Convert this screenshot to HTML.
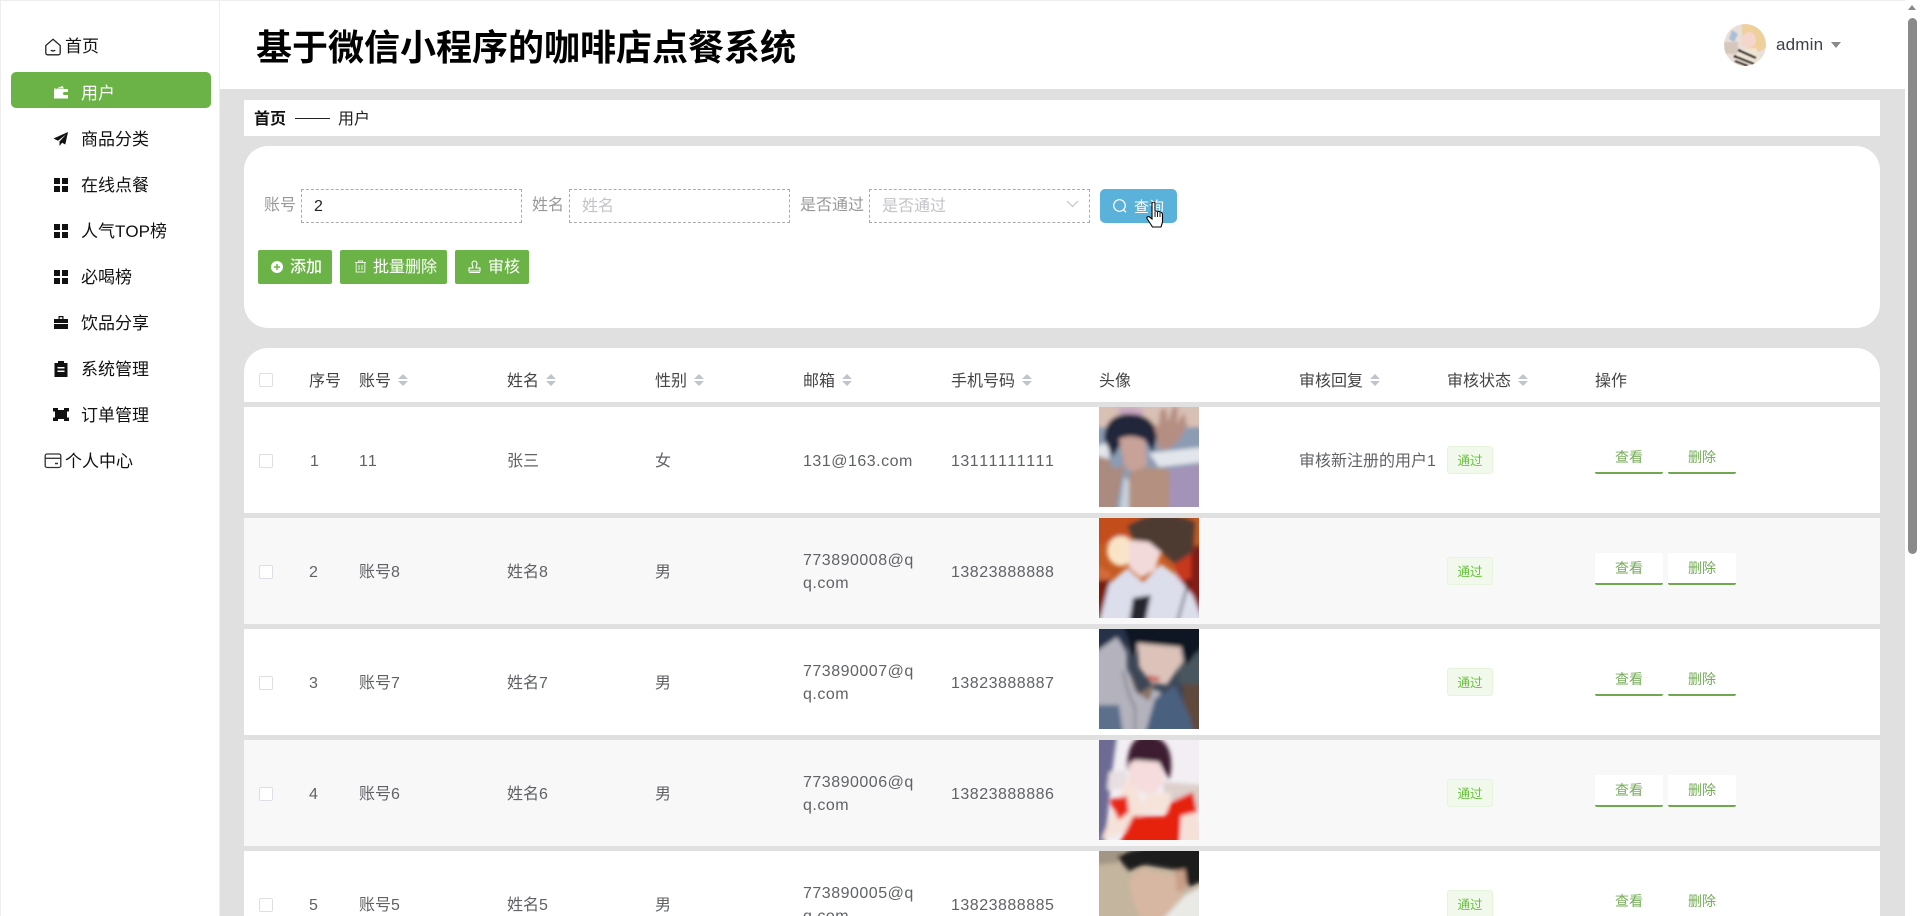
<!DOCTYPE html>
<html lang="zh"><head><meta charset="utf-8"><title>用户</title>
<style>
html,body{margin:0;padding:0;width:1920px;height:916px;overflow:hidden;background:#fff}
body{position:relative;font-family:"Liberation Sans","Noto Sans CJK SC",sans-serif;font-size:16px;color:#606266;font-kerning:none}
.a,.t,.h,.n,.chk,.car,.tag,.op,.r,.btn,.img{position:absolute}
.t{white-space:nowrap;line-height:24px;height:24px}
.n{left:0;margin-top:1px;white-space:nowrap;font-size:17px;color:#111;line-height:24px;height:24px}
.n.s{left:81px}.n.m{left:65px}
.h{color:#444;white-space:nowrap;line-height:24px;height:24px;top:370px}
.chk{left:259px;width:12px;height:12px;border:1px solid #dcdfe6;background:#fff;border-radius:2px}
.car{width:10px;height:12px;top:374px}
.r{left:244px;width:1636px;height:106px;background:#fff}
.r.e{background:#f8f8f8}
.tag{left:1447px;width:44px;height:26px;line-height:28px;border:1px solid #e6f3dd;background:#f0f9eb;color:#67c23a;font-size:12.500px;text-align:center;border-radius:3px}
.op{width:68px;height:30px;line-height:30px;border-bottom:2px solid #6fa84f;background:#fff;color:#74ad58;font-size:14px;text-align:center;border-radius:2px}
.op.v{left:1595px}.op.d{left:1668px}
.btn{top:250px;height:34px;background:#6cb347;border-radius:2px;color:#fff}
.btn span{position:absolute;top:5px;line-height:24px;white-space:nowrap}
.img{left:1099px;width:100px;height:100px}
.lb{color:#999}
.in{position:absolute;top:189px;height:32px;border:1px dashed #aaa;background:#fff;line-height:34px;color:#c4c4c8;box-sizing:content-box}
.ls{letter-spacing:.5px}
</style></head><body>

<!-- frame -->
<div class="a" style="left:0;top:0;width:219px;height:916px;background:#fff;border-right:1px solid #eee;box-shadow:inset 1px 1px 0 #eee"></div>
<div class="a" style="left:220px;top:0;width:1685px;height:89px;background:#fff;border-top:1px solid #eee;box-sizing:border-box"></div>
<div class="a" style="left:220px;top:89px;width:1685px;height:827px;background:#e0e0e0"></div>
<div class="a" style="left:1905px;top:0;width:15px;height:916px;background:#fff"></div>
<div class="a" style="left:1908px;top:18px;width:9px;height:536px;background:#8a8a8a;border-radius:5px"></div>
<div class="a" style="left:1908px;top:5px;width:0;height:0;border-left:4.500px solid transparent;border-right:4.500px solid transparent;border-bottom:5px solid #8a8a8a"></div>

<!-- sidebar -->
<div class="a" style="left:11px;top:72px;width:200px;height:36px;background:#6cb347;border-radius:5px"></div>
<svg class="a" style="left:44px;top:38px" width="18" height="18" viewBox="0 0 18 18" fill="none" stroke="#222" stroke-width="1.300"><path d="M9 1.300 16.200 7.500V15a1.800 1.800 0 0 1-1.800 1.800H3.600A1.800 1.800 0 0 1 1.800 15V7.500Z"/><path d="M6.800 12.200q2.200 1.500 4.400 0"/></svg>
<div class="n m" style="top:34px">首页</div>
<svg class="a" style="left:53px;top:85px" width="16" height="14" viewBox="0 0 16 14" fill="#fff"><path d="M1 4.500 9.500 1l1.500 2.500H1ZM1 4h14v3h-3.500a1.500 1.500 0 0 0 0 3H15v3.500H1Z"/></svg>
<div class="n s" style="top:81px;color:#fff">用户</div>
<svg class="a" style="left:53px;top:131px" width="16" height="16" viewBox="0 0 16 16" fill="#111"><path d="M15 1 0.500 7.500l4.500 2.200L13 3.500 6.500 10.500V15l2.600-3.300 3.200 1.800Z"/></svg>
<div class="n s" style="top:127px">商品分类</div>
<svg class="a" style="left:54px;top:178px" width="14" height="14" fill="#111"><rect width="6" height="6"/><rect x="8" width="6" height="6"/><rect y="8" width="6" height="6"/><rect x="8" y="8" width="6" height="6"/></svg>
<div class="n s" style="top:173px">在线点餐</div>
<svg class="a" style="left:54px;top:224px" width="14" height="14" fill="#111"><rect width="6" height="6"/><rect x="8" width="6" height="6"/><rect y="8" width="6" height="6"/><rect x="8" y="8" width="6" height="6"/></svg>
<div class="n s" style="top:219px">人气TOP榜</div>
<svg class="a" style="left:54px;top:270px" width="14" height="14" fill="#111"><rect width="6" height="6"/><rect x="8" width="6" height="6"/><rect y="8" width="6" height="6"/><rect x="8" y="8" width="6" height="6"/></svg>
<div class="n s" style="top:265px">必喝榜</div>
<svg class="a" style="left:54px;top:315px" width="14" height="15" viewBox="0 0 14 15" fill="#111"><path d="M4.500 1h5v3H8.300V2.200H5.700V4H4.500ZM0 4h14v4H0ZM0 9h14v5H0Z"/></svg>
<div class="n s" style="top:311px">饮品分享</div>
<svg class="a" style="left:54px;top:361px" width="14" height="16" viewBox="0 0 14 16" fill="#111"><path d="M4 0h6v2h3.500v14H.5V2H4Zm-.5 6v1.500h7V6Zm0 3.500V11h7V9.500Z" fill-rule="evenodd"/></svg>
<div class="n s" style="top:357px">系统管理</div>
<svg class="a" style="left:53px;top:408px" width="16" height="13" viewBox="0 0 16 13" fill="#111"><path d="M0 0h5v2h6V0h5v3.500h-2V9.500h2V13h-5v-2H5v2H0V9.500h2V3.500H0Z"/></svg>
<div class="n s" style="top:403px">订单管理</div>
<svg class="a" style="left:44px;top:452px" width="18" height="18" viewBox="0 0 18 18" fill="none" stroke="#333" stroke-width="1.300"><rect x="1.200" y="2" width="15.600" height="13.500" rx="1.800"/><path d="M1.200 6.300h15.600"/><path d="M11 11.500h3" stroke-width="1.500"/></svg>
<div class="n m" style="top:449px">个人中心</div>

<!-- header -->
<div class="t" style="left:256px;top:26px;height:44px;line-height:44px;font-size:36px;font-weight:700;color:#000">基于微信小程序的咖啡店点餐系统</div>
<svg class="a" style="left:1724px;top:24px" width="42" height="42" viewBox="0 0 42 42"><defs><clipPath id="c0"><circle cx="21" cy="21" r="21"/></clipPath><filter id="bs"><feGaussianBlur stdDeviation=".8"/></filter></defs><g clip-path="url(#c0)"><rect width="42" height="42" fill="#e9dfd8"/><g filter="url(#bs)"><path d="M18 0H42V24L30 30 18 20Z" fill="#efcf9a"/><ellipse cx="25" cy="16" rx="7" ry="8" fill="#f6d6cc"/><path d="M8 6l6 4-4 8-5-3Z" fill="#a9bfd8"/><path d="M0 18h14v12H0Z" fill="#d6c7bd"/><path d="M10 42 14 26l18-2 8 18Z" fill="#efe5d6"/><path d="M10 32 30 40M11 37 24 42M14 26 32 34" stroke="#2b2320" stroke-width="2.500"/></g></g></svg>
<div class="t" style="left:1776px;top:33px;font-size:17px;color:#3a3f4b;letter-spacing:.2px">admin</div>
<div class="a" style="left:1831px;top:42px;width:0;height:0;border-left:5.500px solid transparent;border-right:5.500px solid transparent;border-top:6.500px solid #8a8a8a"></div>

<!-- breadcrumb -->
<div class="a" style="left:244px;top:100px;width:1636px;height:36px;background:#fff"></div>
<div class="t" style="left:254px;top:108px;font-size:16px;font-weight:700;color:#111">首页</div>
<div class="a" style="left:295px;top:118px;width:35px;height:1px;background:#222"></div>
<div class="t" style="left:338px;top:108px;font-size:16px;color:#222">用户</div>

<!-- search card -->
<div class="a" style="left:244px;top:146px;width:1636px;height:182px;background:#fff;border-radius:24px"></div>
<div class="t lb" style="left:264px;top:194px">账号</div>
<div class="in" style="left:301px;width:219px;color:#222"><span style="margin-left:12px">2</span></div>
<div class="t lb" style="left:532px;top:194px">姓名</div>
<div class="in" style="left:569px;width:219px"><span style="margin-left:12px">姓名</span></div>
<div class="t lb" style="left:800px;top:194px">是否通过</div>
<div class="in" style="left:869px;width:219px"><span style="margin-left:12px">是否通过</span></div>
<svg class="a" style="left:1066px;top:200px" width="13" height="8" fill="none" stroke="#c4c4c8" stroke-width="1.200"><path d="M1 1l5.500 5.500L12 1"/></svg>
<div class="a" style="left:1100px;top:189px;width:77px;height:34px;background:#5ab1d9;border-radius:5px"></div>
<svg class="a" style="left:1112px;top:198px" width="16" height="16" fill="none" stroke="#fff" stroke-width="1.200"><circle cx="7.500" cy="7.500" r="5.800"/><path d="M11.500 11.800l2.500 2.500"/></svg>
<div class="t" style="left:1134px;top:196px;font-size:15px;color:#fff">查询</div>
<svg class="a" style="left:1146px;top:202px" width="18" height="26" viewBox="0 0 18 26"><path d="M6 1.500a1.500 1.500 0 0 1 3 0V9l2.500.2 1.700.5 2.300.8c.8.500 1 1.200 1 2.500V20l-1.500 5H6.500L1 16.500C.3 15 2 14 3.500 15L6 17Z" fill="#fff" stroke="#000" stroke-width="1.100"/><path d="M9 10v5M11.500 10v5M14 11v4" stroke="#000" stroke-width=".9"/></svg>

<div class="btn" style="left:258px;width:74px"><svg class="a" style="left:13px;top:11px" width="12" height="12"><circle cx="6" cy="6" r="6" fill="#fff"/><path d="M6 3v6M3 6h6" stroke="#6cb347" stroke-width="1.500"/></svg><span style="left:32px;top:5.500px;font-weight:500">添加</span></div>
<div class="btn" style="left:340px;width:107px"><svg class="a" style="left:14px;top:10px" width="13" height="13" fill="none" stroke="#e6f2de" stroke-width="1"><path d="M1 2.500h11M4.500 2.500V1h4v1.500M2.200 2.500v9.500h8.600V2.500M5 5v5M8 5v5"/></svg><span style="left:33px;top:5.500px">批量删除</span></div>
<div class="btn" style="left:455px;width:74px"><svg class="a" style="left:13px;top:10px" width="13" height="13" fill="none" stroke="#fff" stroke-width="1.100"><path d="M6.500 1a2.500 2.500 0 0 1 2.500 2.500c0 1.500-1 2.500-1 4.500h4v3H1V8h4c0-2-1-3-1-4.500A2.500 2.500 0 0 1 6.500 1ZM1 12.500h11"/></svg><span style="left:33px;top:5.500px">审核</span></div>

<!-- table header -->
<div class="a" style="left:244px;top:348px;width:1636px;height:54px;background:#fff;border-radius:24px 24px 0 0"></div>
<div class="chk" style="top:373px"></div>
<div class="h" style="left:309px">序号</div>
<div class="h" style="left:359px">账号</div>
<div class="h" style="left:507px">姓名</div>
<div class="h" style="left:655px">性别</div>
<div class="h" style="left:803px">邮箱</div>
<div class="h" style="left:951px">手机号码</div>
<div class="h" style="left:1099px">头像</div>
<div class="h" style="left:1299px">审核回复</div>
<div class="h" style="left:1447px">审核状态</div>
<div class="h" style="left:1595px">操作</div>
<svg class="car" style="left:398px" viewBox="0 0 10 12" fill="#c0c4cc"><path d="M5 0l5 5H0ZM5 12l5-5H0Z"/></svg>
<svg class="car" style="left:546px" viewBox="0 0 10 12" fill="#c0c4cc"><path d="M5 0l5 5H0ZM5 12l5-5H0Z"/></svg>
<svg class="car" style="left:694px" viewBox="0 0 10 12" fill="#c0c4cc"><path d="M5 0l5 5H0ZM5 12l5-5H0Z"/></svg>
<svg class="car" style="left:842px" viewBox="0 0 10 12" fill="#c0c4cc"><path d="M5 0l5 5H0ZM5 12l5-5H0Z"/></svg>
<svg class="car" style="left:1022px" viewBox="0 0 10 12" fill="#c0c4cc"><path d="M5 0l5 5H0ZM5 12l5-5H0Z"/></svg>
<svg class="car" style="left:1370px" viewBox="0 0 10 12" fill="#c0c4cc"><path d="M5 0l5 5H0ZM5 12l5-5H0Z"/></svg>
<svg class="car" style="left:1518px" viewBox="0 0 10 12" fill="#c0c4cc"><path d="M5 0l5 5H0ZM5 12l5-5H0Z"/></svg>

<!-- row 1 -->
<div class="r" style="top:407px"></div>
<div class="chk" style="top:454px"></div>
<div class="t" style="left:310px;top:450px">1</div>
<div class="t" style="left:359px;top:450px">11</div>
<div class="t" style="left:507px;top:450px">张三</div>
<div class="t" style="left:655px;top:450px">女</div>
<div class="t ls" style="left:803px;top:450px">131@163.com</div>
<div class="t ls" style="left:951px;top:450px">13111111111</div>
<svg class="img" style="top:407px" viewBox="0 0 100 100"><defs><filter id="b" x="-10%" y="-10%" width="120%" height="120%"><feGaussianBlur stdDeviation="2"/></filter><clipPath id="cp"><rect width="100" height="100"/></clipPath></defs><g clip-path="url(#cp)"><rect width="100" height="100" fill="#8d9db2"/><g filter="url(#b)"><rect x="-5" y="-5" width="110" height="25" fill="#d9c0b4"/><path d="M-5 20H105V70H-5Z" fill="#8b9cb4"/><path d="M50 46 105 40V55L60 60ZM-5 40l15-5v25L-5 55Z" fill="#e2e6ec"/><path d="M25 70 45 85 30 105H20Z" fill="#c8d0dc"/><path d="M18 2q15-6 28 3l-5 6H24Z" fill="#c8a7c2"/><path d="M5 32Q6 6 32 7 56 8 58 30L54 46 46 33 24 33 14 50Z" fill="#20263a"/><path d="M20 32Q32 26 46 33L48 56 40 68 26 60Z" fill="#c8a198"/><path d="M30 66 46 60 70 62 74 105H30Z" fill="#b3907f"/><path d="M71 62 105 56V105H70Z" fill="#a493b8"/><path d="M58 30 54 16l5 4 3-18h5l2 13 5-15h5l-1 17 7-12 3 14-8 14-10 9H60Z" fill="#b58e83"/><path d="M-5 48 10 52 14 62 26 58 22 76 16 105H-5Z" fill="#ab8a7f"/></g></g></svg>
<div class="t" style="left:1299px;top:450px">审核新注册的用户1</div>
<div class="tag" style="top:446px">通过</div>
<div class="op v" style="top:442px">查看</div>
<div class="op d" style="top:442px">删除</div>

<!-- row 2 -->
<div class="r e" style="top:518px"></div>
<div class="chk" style="top:565px"></div>
<div class="t" style="left:309px;top:561px">2</div>
<div class="t" style="left:359px;top:561px">账号8</div>
<div class="t" style="left:507px;top:561px">姓名8</div>
<div class="t" style="left:655px;top:561px">男</div>
<div class="t ls" style="left:803px;top:549px">773890008@q</div>
<div class="t ls" style="left:803px;top:572px">q.com</div>
<div class="t ls" style="left:951px;top:561px">13823888888</div>
<svg class="img" style="top:518px" viewBox="0 0 100 100"><g clip-path="url(#cp)"><rect width="100" height="100" fill="#c65a22"/><g filter="url(#b)"><path d="M-5-5h45L30 20-5 28Z" fill="#c44e1a"/><ellipse cx="22" cy="33" rx="14" ry="15" fill="#fae4c8"/><path d="M-5 45 12 55 8 70-5 80Z" fill="#d46a3a"/><path d="M-5 62H12L6 105H-5Z" fill="#7a1a10"/><path d="M78 28H105V105H78Z" fill="#861e12"/><path d="M74 40 92 30V60L80 64Z" fill="#c8391c"/><path d="M28 8Q60-12 96 4L94 34 76 46 62 34 50 24 34 22Z" fill="#4d3b31"/><path d="M30 22 50 24 62 34 56 52 42 60 30 50Z" fill="#f2dada"/><path d="M0 105 10 66 28 50 44 64 62 46 76 56 94 78 105 105Z" fill="#dcdeec"/><path d="M30 105 34 80 52 77 46 105Z" fill="#26282e"/><path d="M78 105 90 62" stroke="#161616" stroke-width="1.800"/></g></g></svg>
<div class="tag" style="top:557px">通过</div>
<div class="op v" style="top:553px">查看</div>
<div class="op d" style="top:553px">删除</div>

<!-- row 3 -->
<div class="r" style="top:629px"></div>
<div class="chk" style="top:676px"></div>
<div class="t" style="left:309px;top:672px">3</div>
<div class="t" style="left:359px;top:672px">账号7</div>
<div class="t" style="left:507px;top:672px">姓名7</div>
<div class="t" style="left:655px;top:672px">男</div>
<div class="t ls" style="left:803px;top:660px">773890007@q</div>
<div class="t ls" style="left:803px;top:683px">q.com</div>
<div class="t ls" style="left:951px;top:672px">13823888887</div>
<svg class="img" style="top:629px" viewBox="0 0 100 100"><g clip-path="url(#cp)"><rect width="100" height="100" fill="#3c4656"/><g filter="url(#b)"><path d="M-5-5H28V20H-5Z" fill="#25334a"/><path d="M80 25H105V55H80Z" fill="#4a565e"/><path d="M84 55H105V105H84Z" fill="#5e4a3c"/><path d="M24-5H105V14L88 36 82 18 40 14 34 28Z" fill="#111520"/><path d="M38 14 82 18 84 32 68 56 52 54 40 38Z" fill="#dcc2b9"/><path d="M48 46l14 3-4 4-9-2Z" fill="#c95a52"/><path d="M-5 24 18 8 28 24 28 40 40 66 52 60 62 62 48 105H-5Z" fill="#b3b2bd"/><path d="M28 36 40 64 56 54 50 72 36 62Z" fill="#8a7264"/><path d="M46 105 56 70 76 56 90 86 96 105Z" fill="#48607f"/><path d="M-5 76H20L24 105H-5Z" fill="#5b6f8c"/><path d="M24 42Q30 70 36 78V105" stroke="#2a2a2a" stroke-width="1" fill="none"/></g></g></svg>
<div class="tag" style="top:668px">通过</div>
<div class="op v" style="top:664px">查看</div>
<div class="op d" style="top:664px">删除</div>

<!-- row 4 -->
<div class="r e" style="top:740px"></div>
<div class="chk" style="top:787px"></div>
<div class="t" style="left:309px;top:783px">4</div>
<div class="t" style="left:359px;top:783px">账号6</div>
<div class="t" style="left:507px;top:783px">姓名6</div>
<div class="t" style="left:655px;top:783px">男</div>
<div class="t ls" style="left:803px;top:771px">773890006@q</div>
<div class="t ls" style="left:803px;top:794px">q.com</div>
<div class="t ls" style="left:951px;top:783px">13823888886</div>
<svg class="img" style="top:740px" viewBox="0 0 100 100"><g clip-path="url(#cp)"><rect width="100" height="100" fill="#f2eef3"/><g filter="url(#b)"><path d="M-5-5H18L12 40 6 105H-5Z" fill="#6d6b94"/><path d="M10 32 28 30 26 48 8 50Z" fill="#e7dfe2"/><path d="M64 42 105 45V70L66 58Z" fill="#ddcfcb"/><path d="M28 30Q28-6 50-4 74-2 72 30L70 40 60 22 36 20Z" fill="#3e1a30"/><path d="M30 24 36 20 60 22 66 38 56 54H46L30 44Z" fill="#f6dcdc"/><path d="M28 38 38 50 46 72 30 90 2 100 12 76Z" fill="#f6e2d8"/><path d="M46 56 60 54 72 52 68 72 42 74Z" fill="#f6e4da"/><path d="M10 60 28 56 30 72 20 80Z" fill="#e92514"/><path d="M34 76 66 76 72 62 94 52 99 76 82 78 80 105H20Z" fill="#e6210f"/><path d="M82 76 98 72 105 105H82Z" fill="#f6e1d9"/></g></g></svg>
<div class="tag" style="top:779px">通过</div>
<div class="op v" style="top:775px">查看</div>
<div class="op d" style="top:775px">删除</div>

<!-- row 5 -->
<div class="r" style="top:851px;height:65px"></div>
<div class="chk" style="top:898px"></div>
<div class="t" style="left:309px;top:894px">5</div>
<div class="t" style="left:359px;top:894px">账号5</div>
<div class="t" style="left:507px;top:894px">姓名5</div>
<div class="t" style="left:655px;top:894px">男</div>
<div class="t ls" style="left:803px;top:882px">773890005@q</div>
<div class="t ls" style="left:803px;top:905px">q.com</div>
<div class="t ls" style="left:951px;top:894px">13823888885</div>
<svg class="img" style="top:851px;height:65px" viewBox="0 0 100 65" preserveAspectRatio="none"><defs><clipPath id="cq"><rect width="100" height="65"/></clipPath></defs><g clip-path="url(#cq)"><rect width="100" height="65" fill="#c4b59f"/><g filter="url(#b)"><path d="M-5-5H26L18 12-5 14Z" fill="#a39684"/><path d="M30 32 40 18 76 24 84 44 62 70H42L34 48Z" fill="#d8b7a2"/><path d="M18 6Q36-8 105-5V30L90 36 82 20 46 14 30 20Z" fill="#1e1a1c"/><path d="M76 20 86 18 88 36 78 42Z" fill="#c79e88"/><path d="M62 70 86 44 105 34V70Z" fill="#e9e9e6"/></g></g></svg>
<div class="tag" style="top:890px">通过</div>
<div class="op v" style="top:886px;border-bottom:none;height:32px">查看</div>
<div class="op d" style="top:886px;border-bottom:none;height:32px">删除</div>

</body></html>
